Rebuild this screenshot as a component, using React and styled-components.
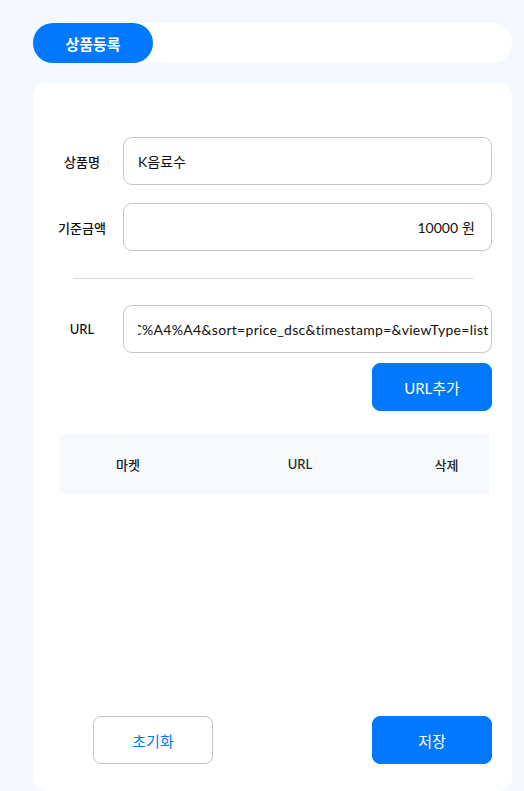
import { useEffect, useRef } from "react";
import styled, { createGlobalStyle } from "styled-components";

const GlobalStyle = createGlobalStyle`
  * { box-sizing: border-box; }
  body {
    margin: 0;
    background: #f3f9fe;
    font-family: Lato, "Noto Sans CJK KR", sans-serif;
    color: #111;
  }
`;

const BLUE = "#0078ff";

const Page = styled.div`
  min-height: 791px;
  padding: 23px 12px 0 33px;
  display: flex;
  flex-direction: column;
  gap: 20px;
`;

const TabBar = styled.div`
  height: 40px;
  background: #fff;
  border-radius: 20px;
  display: flex;
`;

const Tab = styled.button`
  width: 120px;
  height: 40px;
  border: 0;
  border-radius: 20px;
  background: ${(p) => (p.$active ? BLUE : "transparent")};
  color: ${(p) => (p.$active ? "#fff" : "#333")};
  font-family: "Noto Sans CJK KR", sans-serif;
  font-size: 15px;
  font-weight: 700;
  cursor: pointer;
`;

const Card = styled.div`
  height: 708px;
  background: #fff;
  border-radius: 14px;
  padding: 54px 20px 27px 27px;
  display: flex;
  flex-direction: column;
`;

const Row = styled.div`
  display: flex;
  align-items: center;
  gap: 19px;
  margin-bottom: ${(p) => p.$mb || 0}px;
`;

const Label = styled.label`
  width: 44px;
  flex-shrink: 0;
  text-align: center;
  white-space: nowrap;
  display: flex;
  justify-content: center;
  font-family: Lato, "Noto Sans CJK KR", sans-serif;
  font-size: 13px;
  font-weight: 500;
  color: #111;
`;

const Field = styled.div`
  flex: 1;
  height: 48px;
  border: 1px solid #c6c6c6;
  border-radius: 9px;
  display: flex;
  align-items: center;
  padding: 0 ${(p) => p.$pr ?? 16}px 0 14px;
  gap: 4px;
`;

const Input = styled.input`
  flex: 1;
  min-width: 0;
  border: 0;
  outline: none;
  background: transparent;
  font-family: Lato, "Noto Sans CJK KR", sans-serif;
  font-size: 14px;
  letter-spacing: ${(p) => p.$spaced ? "0.3px" : "0"};
  color: #111;
  caret-color: #000;
  text-align: ${(p) => (p.$right ? "right" : "left")};
  padding: 0;
`;

const Suffix = styled.span`
  font-family: "Noto Sans CJK KR", sans-serif;
  font-size: 14px;
  color: #111;
`;

const Divider = styled.hr`
  width: 400px;
  margin: 27px 0 26px 13px;
  border: 0;
  border-top: 1px solid #d8d8d8;
`;

const Button = styled.button`
  width: 120px;
  height: 48px;
  border-radius: 8px;
  border: 1px solid ${(p) => (p.$outline ? "#c4c4c4" : BLUE)};
  background: ${(p) => (p.$outline ? "#fff" : BLUE)};
  color: ${(p) => (p.$outline ? BLUE : "#fff")};
  font-family: Lato, "Noto Sans CJK KR", sans-serif;
  font-size: 15px;
  cursor: pointer;
`;

const AddRow = styled.div`
  display: flex;
  justify-content: flex-end;
  margin-top: 10px;
`;

const TableHead = styled.div`
  margin-top: 23px;
  width: 429px;
  height: 60px;
  background: #f6f9fd;
  display: grid;
  grid-template-columns: 136px 208px 1fr;
  align-items: center;
  text-align: center;
  font-family: Lato, "Noto Sans CJK KR", sans-serif;
  font-size: 13px;
  font-weight: 500;
  color: #222;
`;

const Footer = styled.div`
  margin-top: auto;
  display: flex;
  justify-content: space-between;
  padding-left: 33px;
`;

const URL_VALUE =
  "https://search.shopping.naver.com/search/all?query=K%EC%9D%8C%EB%A3%8C%EC%88%98&prevQuery=%EC%9D%8C%EB%A3%8C%EC%88%98%EA%B0%80%EA%B2%A9%EB%B9%84%EA%B5%90%EB%A6%AC%EC%8A%A4%ED%8A%B8%EA%B5%90%EC%A4%A4&sort=price_dsc&timestamp=&viewType=list";

export default function App() {
  const urlRef = useRef(null);

  useEffect(() => {
    const el = urlRef.current;
    if (el) {
      el.focus();
      el.setSelectionRange(el.value.length, el.value.length);
      el.scrollLeft = el.scrollWidth;
    }
  }, []);

  return (
    <>
      <GlobalStyle />
      <Page>
        <TabBar>
          <Tab $active>상품등록</Tab>
        </TabBar>
        <Card>
          <Row $mb={18}>
            <Label>상품명</Label>
            <Field>
              <Input defaultValue="K음료수" />
            </Field>
          </Row>
          <Row>
            <Label>기준금액</Label>
            <Field>
              <Input $right defaultValue="10000" />
              <Suffix>원</Suffix>
            </Field>
          </Row>
          <Divider />
          <Row>
            <Label>URL</Label>
            <Field $pr={2}>
              <Input $spaced ref={urlRef} defaultValue={URL_VALUE} />
            </Field>
          </Row>
          <AddRow>
            <Button>URL추가</Button>
          </AddRow>
          <TableHead>
            <span>마켓</span>
            <span>URL</span>
            <span>삭제</span>
          </TableHead>
          <Footer>
            <Button $outline>초기화</Button>
            <Button>저장</Button>
          </Footer>
        </Card>
      </Page>
    </>
  );
}
